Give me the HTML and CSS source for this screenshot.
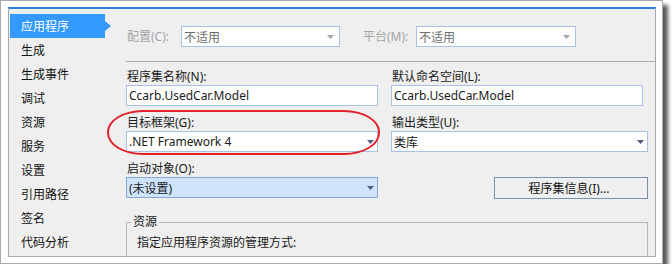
FILE: index.html
```html
<!DOCTYPE html>
<html lang="zh-CN">
<head>
<meta charset="UTF-8" />
<title>应用程序</title>
<link rel="stylesheet" href="styles.css">
</head>
<body>

<div class="frame">
  <div class="panel">
    <ul class="nav">
      <li class="nav-item active">应用程序</li>
      <li class="nav-item">生成</li>
      <li class="nav-item">生成事件</li>
      <li class="nav-item">调试</li>
      <li class="nav-item">资源</li>
      <li class="nav-item">服务</li>
      <li class="nav-item">设置</li>
      <li class="nav-item">引用路径</li>
      <li class="nav-item">签名</li>
      <li class="nav-item">代码分析</li>
    </ul>

    <div class="main">
      <div class="config-row">
        <span class="label disabled config-label">配置(C):</span>
        <div class="combo disabled config-combo">
          <span>不适用</span>
          <svg class="arrow" width="7" height="4" viewBox="0 0 7 4"><polygon points="0,0 7,0 3.5,4" /></svg>
        </div>
        <span class="label disabled platform-label">平台(M):</span>
        <div class="combo disabled platform-combo">
          <span>不适用</span>
          <svg class="arrow" width="7" height="4" viewBox="0 0 7 4"><polygon points="0,0 7,0 3.5,4" /></svg>
        </div>
      </div>

      <div class="sep"></div>

      <div class="fields">
        <div class="field">
          <span class="label">程序集名称(N):</span>
          <div class="textbox">Ccarb.UsedCar.Model</div>
        </div>
        <div class="field">
          <span class="label">默认命名空间(L):</span>
          <div class="textbox narrow">Ccarb.UsedCar.Model</div>
        </div>

        <div class="field">
          <span class="label">目标框架(G):</span>
          <div class="combo">
            <span>.NET Framework 4</span>
            <svg class="arrow" width="7" height="4" viewBox="0 0 7 4"><polygon points="0,0 7,0 3.5,4" /></svg>
          </div>
        </div>
        <div class="field">
          <span class="label">输出类型(U):</span>
          <div class="combo">
            <span>类库</span>
            <svg class="arrow" width="7" height="4" viewBox="0 0 7 4"><polygon points="0,0 7,0 3.5,4" /></svg>
          </div>
        </div>

        <div class="field">
          <span class="label">启动对象(O):</span>
          <div class="combo focused">
            <span>(未设置)</span>
            <svg class="arrow" width="7" height="4" viewBox="0 0 7 4"><polygon points="0,0 7,0 3.5,4" /></svg>
          </div>
        </div>
        <div class="field button-cell">
          <button class="btn" type="button">程序集信息(I)...</button>
        </div>
      </div>

      <fieldset class="group">
        <legend>资源</legend>
        <p class="group-text">指定应用程序资源的管理方式:</p>
      </fieldset>

      <div class="highlight"></div>
    </div>
  </div>
</div>

</body>
</html>
```

FILE: styles.css
```css
body {
  margin: 0;
  background: #ffffff;
  font-family: "Noto Sans", "Noto Sans CJK SC", sans-serif;
  font-size: 12px;
  color: #1a1a1a;
}
.frame {
  box-sizing: border-box;
  width: 663px;
  height: 264px;
  padding: 6px 6px 6px 7px;
  border: 1px solid #a9a9a9;
  background: #ffffff;
  box-shadow: 5px 5px 4px rgba(0, 0, 0, 0.65);
}
.panel {
  box-sizing: border-box;
  display: flex;
  height: 250px;
  border: 1px solid #a9a9a9;
  border-top: 2px solid #2a82d6;
  background: #efefef;
  overflow: hidden;
}

/* левая навигация */
.nav {
  list-style: none;
  margin: 0;
  padding: 5px 0 0 1px;
  width: 102px;
  flex: none;
}
.nav-item {
  position: relative;
  width: 95px;
  height: 24px;
  line-height: 24px;
  padding-left: 11px;
  box-sizing: border-box;
  font-family: "Noto Sans CJK SC", sans-serif;
  color: #111;
}
.nav-item.active {
  background: #3399ff;
  color: #ffffff;
}
.nav-item.active::after {
  content: "";
  position: absolute;
  right: -6px;
  top: 7px;
  border-top: 5px solid transparent;
  border-bottom: 5px solid transparent;
  border-left: 6px solid #3399ff;
}

.main {
  position: relative;
  flex: 1;
  padding: 17px 0 0 14px;
}
.label {
  display: block;
  height: 17px;
  line-height: 17px;
  padding-left: 1px;
  white-space: nowrap;
}
.label.disabled {
  color: #a4a4a4;
}

/* строка конфигурации */
.config-row {
  display: flex;
  align-items: center;
  height: 21px;
}
.config-label {
  width: 54px;
}
.platform-label {
  width: 53px;
  margin-left: 22px;
}
.config-combo {
  width: 159px;
}
.platform-combo {
  width: 160px;
}
.sep {
  height: 1px;
  background: #a8a8a8;
  margin-top: 14px;
}

.fields {
  display: grid;
  grid-template-columns: 252px 257px;
  column-gap: 13px;
  row-gap: 8px;
  margin-top: 6px;
}
.field {
  display: flex;
  flex-direction: column;
}
.textbox, .combo {
  box-sizing: border-box;
  height: 21px;
  border: 1px solid #a9c1e6;
  background: #ffffff;
  padding: 0 3px 0 2px;
  display: flex;
  align-items: center;
  white-space: nowrap;
}
.textbox.narrow {
  width: 252px;
}
.combo span {
  flex: 1;
}
.combo .arrow {
  fill: #4b5c7e;
  flex: none;
}
.combo.disabled {
  color: #6d6d6d;
}
.combo.disabled .arrow {
  fill: #a6a6a6;
  margin-right: 2px;
}
.combo.focused {
  background: #cde4fc;
  border-color: #86a9dc;
}
.button-cell {
  justify-content: flex-end;
  align-items: flex-end;
}
.btn {
  width: 154px;
  height: 22px;
  margin-bottom: -1px;
  padding: 0 4px 0 0;
  border: 1px solid #7893b2;
  background: #efefef;
  font: inherit;
  color: #111;
}

/* группа ресурсов */
.group {
  width: 522px;
  box-sizing: border-box;
  margin: 16px 0 0 0;
  padding: 0 0 10px 4px;
  border: 1px solid #b6b6b6;
  border-bottom: none;
}
.group legend {
  padding: 0 2px;
  line-height: 16px;
}
.group-text {
  margin: 5px 0 0 6px;
  line-height: 16px;
}

/* красная пометка */
.highlight {
  position: absolute;
  left: -5px;
  top: 101px;
  width: 273px;
  height: 45px;
  box-sizing: border-box;
  border: 2px solid #e2222b;
  border-radius: 36px / 22px;
}
```
